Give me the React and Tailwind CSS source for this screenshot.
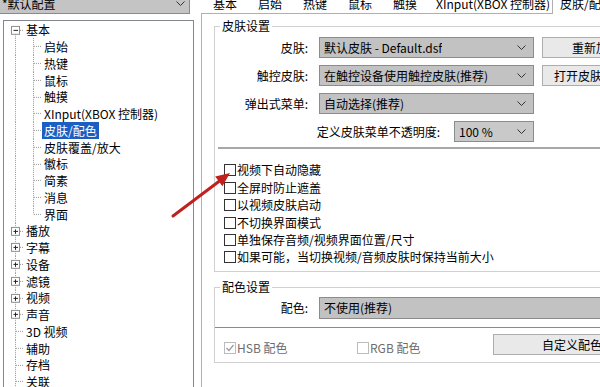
import React from "react";

const tree = [
  { t: "基本", k: "minus", first: true },
  { t: "启始", k: "child" },
  { t: "热键", k: "child" },
  { t: "鼠标", k: "child" },
  { t: "触摸", k: "child" },
  { t: "XInput(XBOX 控制器)", k: "child" },
  { t: "皮肤/配色", k: "child", sel: true },
  { t: "皮肤覆盖/放大", k: "child" },
  { t: "徽标", k: "child" },
  { t: "简素", k: "child" },
  { t: "消息", k: "child" },
  { t: "界面", k: "child", last: true },
  { t: "播放", k: "plus" },
  { t: "字幕", k: "plus" },
  { t: "设备", k: "plus" },
  { t: "滤镜", k: "plus" },
  { t: "视频", k: "plus" },
  { t: "声音", k: "plus" },
  { t: "3D 视频", k: "leaf" },
  { t: "辅助", k: "leaf" },
  { t: "存档", k: "leaf" },
  { t: "关联", k: "leaf" },
];

const dot = { stroke: "#9a9a9a", strokeWidth: 1, strokeDasharray: "1 1", shapeRendering: "crispEdges" };

function Guide({ k, first, last }) {
  if (k === "child") {
    return (
      <svg width="38" height="100%" viewBox="0 0 38 17" preserveAspectRatio="none" className="shrink-0">
        <line x1="11.5" y1="0" x2="11.5" y2="17" {...dot} />
        <line x1="29.5" y1="0" x2="29.5" y2={last ? 8.5 : 17} {...dot} />
        <line x1="30" y1="8.5" x2="37" y2="8.5" {...dot} />
      </svg>
    );
  }
  const box = k === "plus" || k === "minus";
  return (
    <svg width="20" height="100%" viewBox="0 0 20 17" preserveAspectRatio="none" className="shrink-0">
      <line x1="11.5" y1={first ? 8.5 : 0} x2="11.5" y2="17" {...dot} />
      <line x1={box ? 16 : 12} y1="8.5" x2="20" y2="8.5" {...dot} />
      {box && (
        <>
          <rect x="7.5" y="4.5" width="8" height="8" fill="white" stroke="#8e8e8e" shapeRendering="crispEdges" />
          <line x1="9.5" y1="8.5" x2="14" y2="8.5" stroke="#222" shapeRendering="crispEdges" />
          {k === "plus" && <line x1="11.5" y1="6.5" x2="11.5" y2="11" stroke="#222" shapeRendering="crispEdges" />}
        </>
      )}
    </svg>
  );
}

function Chevron() {
  return (
    <svg width="9" height="5" viewBox="0 0 9 5" className="shrink-0">
      <path d="M0.5 0.5 L4.5 4.5 L8.5 0.5" fill="none" stroke="#333" strokeWidth="1" />
    </svg>
  );
}

function Combo({ text, className }) {
  return (
    <div className={`flex shrink-0 items-center justify-between border border-[#8c8c8c] pl-[4px] pr-[7px] ${className}`}>
      <span className="truncate whitespace-nowrap">{text}</span>
      <Chevron />
    </div>
  );
}

function Btn({ children, className }) {
  return (
    <div className={`flex h-[21px] shrink-0 items-center justify-center whitespace-nowrap border border-[#adadad] bg-[#e9e9e9] ${className}`}>
      {children}
    </div>
  );
}

function Check({ label }) {
  return (
    <div className="flex h-[17.4px] items-center">
      <div className="h-[12px] w-[12px] shrink-0 border border-[#333] bg-white" />
      <span className="ml-[1px] whitespace-nowrap leading-[16px]">{label}</span>
    </div>
  );
}

export default function App() {
  return (
    <div className="relative flex h-[387px] w-[600px] overflow-hidden bg-white font-['Noto_Sans_CJK_SC','Noto_Sans',sans-serif] text-[12px] text-black">
      {/* LEFT: profile + tree */}
      <div className="flex w-[196px] shrink-0 flex-col">
        <div className="-mt-[7px] flex h-[21px] w-[190px] shrink-0 items-center justify-between border-b border-r border-[#8a8a8a] bg-[#c4c4c4] pl-[2px] pr-[4px]">
          <span className="leading-[21px]">*默认配置</span>
          <Chevron />
        </div>
        <div className="ml-[3px] mt-[6px] w-[191px] flex-1 border border-[#828790] bg-white pt-[0.6px]">
          {tree.map((item) => (
            <div key={item.t} className="flex h-[16.76px] items-stretch">
              <Guide k={item.k} first={item.first} last={item.last} />
              <span
                className={`self-center whitespace-nowrap px-[2px] leading-[17px] ${
                  item.sel ? "bg-[#1c5fc2] text-white" : ""
                }`}
              >
                {item.t}
              </span>
            </div>
          ))}
        </div>
      </div>

      {/* RIGHT: tabs + page */}
      <div className="ml-[5px] flex min-w-0 flex-1 flex-col">
        <div className="-mt-[6px] flex h-[19px] shrink-0 items-stretch pl-[12px] leading-[19px]">
          <span className="w-[45px] shrink-0">基本</span>
          <span className="w-[45px] shrink-0">启始</span>
          <span className="w-[45px] shrink-0">热键</span>
          <span className="w-[45px] shrink-0">鼠标</span>
          <span className="w-[43px] shrink-0">触摸</span>
          <span className="w-[116px] shrink-0 whitespace-nowrap">XInput(XBOX 控制器)</span>
          <span className="relative z-10 -mb-[1px] -mt-[2px] shrink-0 whitespace-nowrap border-l border-r border-t border-[#b0b0b0] bg-white pl-[7px] pr-[10px] leading-[22px]">
            皮肤/配色
          </span>
        </div>

        <div className="flex-1 border-l border-t border-[#b0b0b0] bg-white">
          {/* 皮肤设置 */}
          <fieldset className="ml-[12px] mt-[4px] w-[430px] border border-[#d0d0d0] pb-[5px]">
            <legend className="ml-[5px] px-[2px] leading-[16px]">皮肤设置</legend>
            <div className="mt-[3px] flex flex-col gap-[7px]">
              <div className="flex h-[21px] items-center">
                <span className="w-[93px] shrink-0 text-right">皮肤:</span>
                <Combo text="默认皮肤 - Default.dsf" className="ml-[11px] h-[21px] w-[215px] bg-[#c2c2c2]" />
                <Btn className="ml-[8px] w-[108px]">重新加载</Btn>
              </div>
              <div className="flex h-[21px] items-center">
                <span className="w-[93px] shrink-0 text-right">触控皮肤:</span>
                <Combo text="在触控设备使用触控皮肤(推荐)" className="ml-[11px] h-[21px] w-[215px] bg-[#c2c2c2]" />
                <Btn className="ml-[8px] w-[108px]">打开皮肤文件夹</Btn>
              </div>
              <div className="flex h-[21px] items-center">
                <span className="w-[93px] shrink-0 text-right">弹出式菜单:</span>
                <Combo text="自动选择(推荐)" className="ml-[11px] h-[21px] w-[215px] bg-[#c2c2c2]" />
              </div>
              <div className="flex h-[21px] items-center">
                <span className="w-[225px] shrink-0 text-right">定义皮肤菜单不透明度:</span>
                <Combo text="100 %" className="ml-[14px] h-[21px] w-[80px] bg-[#c9c9c9]" />
              </div>
            </div>
            <div className="ml-[3px] mt-[5px] h-[2px] bg-[#a8a8a8]" />
            <div className="ml-[9px] mt-[12.8px] flex flex-col">
              <Check label="视频下自动隐藏" />
              <Check label="全屏时防止遮盖" />
              <Check label="以视频皮肤启动" />
              <Check label="不切换界面模式" />
              <Check label="单独保存音频/视频界面位置/尺寸" />
              <Check label="如果可能，当切换视频/音频皮肤时保持当前大小" />
            </div>
          </fieldset>

          {/* 配色设置 */}
          <fieldset className="ml-[12px] mt-[7px] w-[430px] border border-[#d0d0d0] pb-[6px]">
            <legend className="ml-[5px] px-[2px] leading-[16px]">配色设置</legend>
            <div className="mt-[2px] flex h-[22px] items-center">
              <span className="w-[93px] shrink-0 text-right">配色:</span>
              <Combo text="不使用(推荐)" className="ml-[11px] h-[22px] w-[320px] bg-[#c2c2c2]" />
            </div>
            <div className="mt-[8px] h-[1px] bg-[#8a8a8a]" />
            <div className="mt-[6px] flex items-start">
              <div className="ml-[9px] mt-[5px] flex h-[17px] w-[133px] shrink-0 items-center text-[#6d6d6d]">
                <svg width="12" height="12" viewBox="0 0 12 12" className="shrink-0">
                  <rect x="0.5" y="0.5" width="11" height="11" fill="white" stroke="#bcbcbc" />
                  <path d="M2.5 6 L5 8.5 L9.5 3" fill="none" stroke="#9a9a9a" strokeWidth="1.2" />
                </svg>
                <span className="ml-[1px] whitespace-nowrap">HSB 配色</span>
              </div>
              <div className="mt-[5px] flex h-[17px] w-[136px] shrink-0 items-center text-[#6d6d6d]">
                <div className="h-[12px] w-[12px] shrink-0 border border-[#bcbcbc] bg-white" />
                <span className="ml-[1px] whitespace-nowrap">RGB 配色</span>
              </div>
              <Btn className="w-[168px]">自定义配色...</Btn>
            </div>
          </fieldset>
        </div>
      </div>

      {/* red annotation arrow */}
      <svg className="pointer-events-none absolute inset-0" width="600" height="387" viewBox="0 0 600 387">
        <line x1="173" y1="216" x2="219.5" y2="181" stroke="#c0211f" strokeWidth="3" strokeLinecap="round" />
        <polygon points="230,173 222.4,186.2 215.2,176.6" fill="#c0211f" />
      </svg>
    </div>
  );
}
